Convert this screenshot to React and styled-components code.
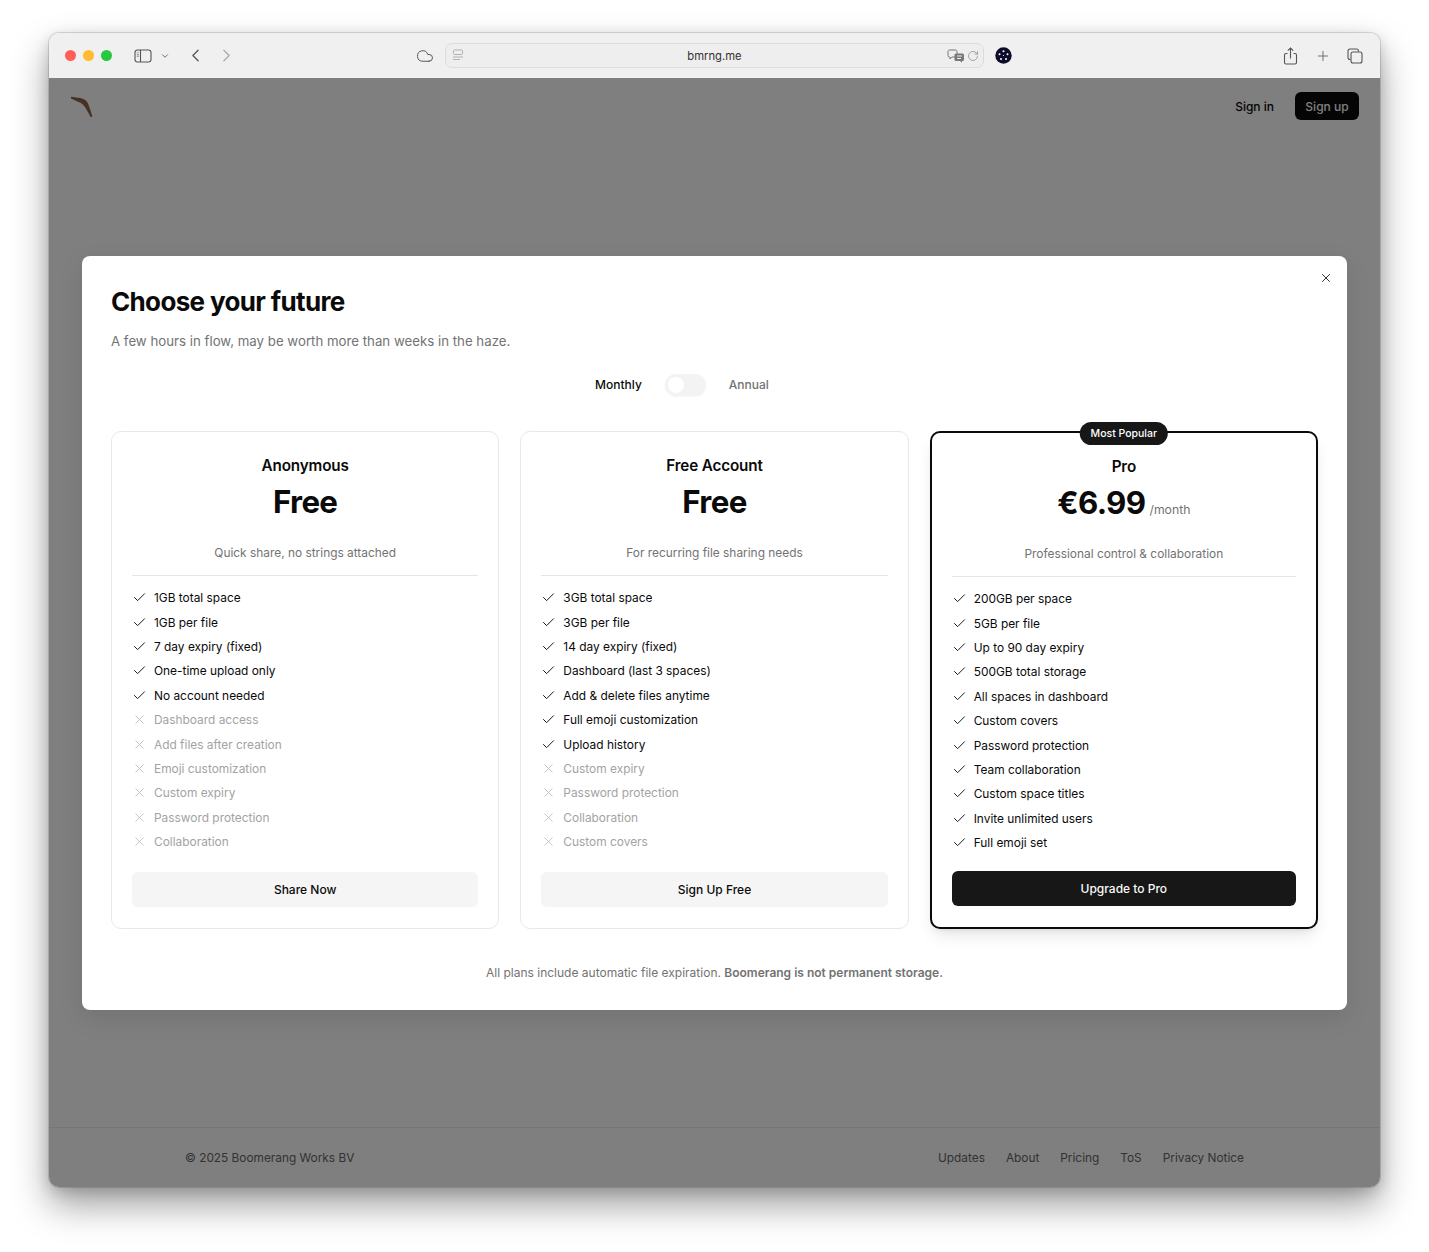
import React from 'react'
import styled, { createGlobalStyle } from 'styled-components'
import { Check, X, ChevronDown, ChevronLeft, ChevronRight, Cloud, Plus, RotateCw } from 'lucide-react'

const Global = createGlobalStyle`
  html, body { margin: 0; background: #fff; }
  body { font-family: Inter, "Liberation Sans", sans-serif; color: #0a0a0a; -webkit-font-smoothing: antialiased; }
  * { box-sizing: border-box; }
`

const Desktop = styled.div`
  height: 1252px;
  padding: 33px 49px 65px;
`
const Win = styled.div`
  position: relative;
  height: 100%;
  display: flex;
  flex-direction: column;
  border-radius: 10px;
  overflow: hidden;
  background: #fff;
  box-shadow: 0 0 0 1px rgba(0,0,0,.12), 0 18px 36px rgba(0,0,0,.38), 0 4px 14px rgba(0,0,0,.16);
`
const Toolbar = styled.div`
  height: 45px;
  flex: none;
  display: flex;
  align-items: center;
  padding: 0 15px 0 16px;
  background: #f0f0f0;
  color: #555;
  svg { flex: none; }
`
const Lights = styled.div`
  display: flex;
  flex: none;
  gap: 7px;
  margin-right: 22px;
`
const Light = styled.span`
  width: 11px;
  height: 11px;
  border-radius: 50%;
  background: ${p => p.$c};
`
const Group = styled.div`
  display: flex;
  flex: none;
  align-items: center;
  gap: ${p => p.$gap || 0}px;
  margin-left: ${p => p.$left || 0}px;
`
const UrlBar = styled.div`
  position: relative;
  width: 539px;
  height: 25px;
  display: flex;
  align-items: center;
  justify-content: space-between;
  padding: 0 4px 0 6px;
  border-radius: 7px;
  border: 1px solid #dcdcdc;
  background: #eeeeee;
  color: #777;
`
const UrlText = styled.span`
  position: absolute;
  left: 0;
  right: 0;
  text-align: center;
  font-size: 11.25px;
  color: #333;
`
const Page = styled.div`
  position: relative;
  flex: 1;
  display: flex;
  flex-direction: column;
`
const Nav = styled.header`
  display: flex;
  align-items: center;
  justify-content: space-between;
  padding: 14px 21px 0 20px;
`
const NavRight = styled.div`
  display: flex;
  align-items: center;
  gap: 21px;
  font-size: 12px;
  font-weight: 500;
`
const SignUp = styled.span`
  height: 28px;
  width: 64px;
  display: flex;
  align-items: center;
  justify-content: center;
  border-radius: 6px;
  background: #0a0a0a;
  color: #fff;
`
const Footer = styled.footer`
  margin-top: auto;
  height: 60px;
  display: flex;
  align-items: center;
  justify-content: space-between;
  padding: 0 136px 0 136px;
  border-top: 1px solid #ececec;
  font-size: 11.85px;
  color: #666;
`
const FootLinks = styled.div`
  display: flex;
  gap: 21px;
`
const Overlay = styled.div`
  position: absolute;
  inset: 0;
  display: flex;
  align-items: center;
  justify-content: center;
  background: rgba(0,0,0,.5);
`
const Modal = styled.div`
  position: relative;
  width: 1265px;
  padding: 30px 29px 28px;
  border-radius: 8px;
  background: #fff;
  box-shadow: 0 8px 24px rgba(0,0,0,.1);
`
const Close = styled.span`
  position: absolute;
  top: 15px;
  right: 14px;
  display: flex;
  color: #222;
`
const Title = styled.h2`
  margin: 0;
  font-size: 26px;
  line-height: 31px;
  font-weight: 700;
  letter-spacing: -0.025em;
  color: #0a0a0a;
`
const Sub = styled.p`
  margin: 14px 0 0;
  font-size: 13.25px;
  line-height: 20px;
  color: #737373;
`
const Billing = styled.div`
  margin-top: 23px;
  padding-right: 65px;
  display: flex;
  align-items: center;
  justify-content: center;
  gap: 23px;
  font-size: 12px;
  font-weight: 500;
`
const BillLabel = styled.span`
  color: ${p => (p.$active ? '#0a0a0a' : '#737373')};
`
const Track = styled.span`
  width: 41px;
  height: 22px;
  padding: 3px;
  border-radius: 11px;
  background: #f3f3f3;
  box-shadow: 0 1px 2px rgba(0,0,0,.04);
`
const Knob = styled.span`
  display: block;
  width: 16px;
  height: 16px;
  border-radius: 50%;
  background: #fff;
`
const Plans = styled.div`
  margin-top: 35px;
  display: grid;
  grid-template-columns: repeat(3, 1fr);
  gap: 21px;
`
const Card = styled.div`
  position: relative;
  height: 498px;
  display: flex;
  flex-direction: column;
  padding: 22px 20px 21px;
  border: ${p => (p.$featured ? '2px solid #0a0a0a' : '1px solid #e8e8e8')};
  border-radius: 10px;
  background: #fff;
  box-shadow: ${p => (p.$featured ? '0 9px 16px -3px rgba(0,0,0,.1), 0 4px 6px -4px rgba(0,0,0,.1)' : 'none')};
`
const Badge = styled.span`
  position: absolute;
  top: -11px;
  left: 50%;
  transform: translateX(-50%);
  height: 23px;
  padding: 0 11px;
  display: flex;
  align-items: center;
  white-space: nowrap;
  border-radius: 12px;
  background: #171717;
  color: #fff;
  font-size: 10.5px;
  font-weight: 500;
`
const PlanHead = styled.div`
  text-align: center;
  padding-bottom: 13px;
  border-bottom: 1px solid #e5e5e5;
`
const PlanName = styled.div`
  font-size: 15.25px;
  line-height: 24px;
  font-weight: 600;
  letter-spacing: -0.01em;
`
const Price = styled.div`
  margin-top: 7px;
  height: 35px;
  display: flex;
  align-items: baseline;
  justify-content: center;
  gap: 4px;
  font-size: 31.25px;
  line-height: 35px;
  font-weight: 700;
  letter-spacing: -0.02em;
`
const Per = styled.span`
  font-size: 12.25px;
  line-height: 14px;
  font-weight: 400;
  letter-spacing: 0;
  color: #737373;
`
const Blurb = styled.div`
  margin-top: 24px;
  font-size: 11.9px;
  line-height: 18px;
  color: #737373;
`
const List = styled.ul`
  list-style: none;
  margin: 13.5px 0 0;
  padding: 0;
  display: flex;
  flex-direction: column;
  gap: 7px;
`
const Row = styled.li`
  display: flex;
  align-items: center;
  gap: 7px;
  height: 17.42px;
  font-size: 11.9px;
  color: ${p => (p.$off ? '#a3a3a3' : '#0a0a0a')};
  svg { flex: none; }
`
const Cta = styled.div`
  margin-top: auto;
  height: 35px;
  display: flex;
  align-items: center;
  justify-content: center;
  border-radius: 6px;
  font-size: 12px;
  font-weight: 500;
  background: ${p => (p.$dark ? '#171717' : '#f5f5f5')};
  color: ${p => (p.$dark ? '#fafafa' : '#0a0a0a')};
`
const Note = styled.p`
  margin: 35px 0 0;
  text-align: center;
  font-size: 12px;
  line-height: 18px;
  color: #737373;
  b { font-weight: 600; }
`

const plans = [
  {
    name: 'Anonymous', price: 'Free', blurb: 'Quick share, no strings attached', cta: 'Share Now',
    yes: ['1GB total space', '1GB per file', '7 day expiry (fixed)', 'One-time upload only', 'No account needed'],
    no: ['Dashboard access', 'Add files after creation', 'Emoji customization', 'Custom expiry', 'Password protection', 'Collaboration'],
  },
  {
    name: 'Free Account', price: 'Free', blurb: 'For recurring file sharing needs', cta: 'Sign Up Free',
    yes: ['3GB total space', '3GB per file', '14 day expiry (fixed)', 'Dashboard (last 3 spaces)', 'Add & delete files anytime', 'Full emoji customization', 'Upload history'],
    no: ['Custom expiry', 'Password protection', 'Collaboration', 'Custom covers'],
  },
  {
    name: 'Pro', price: '€6.99', per: '/month', blurb: 'Professional control & collaboration', cta: 'Upgrade to Pro', featured: true,
    yes: ['200GB per space', '5GB per file', 'Up to 90 day expiry', '500GB total storage', 'All spaces in dashboard', 'Custom covers', 'Password protection', 'Team collaboration', 'Custom space titles', 'Invite unlimited users', 'Full emoji set'],
    no: [],
  },
]

const SidebarIcon = () => (
  <svg width="18" height="14" viewBox="0 0 18 14" fill="none" stroke="#555" strokeWidth="1.1">
    <rect x="1" y="1" width="16" height="12" rx="2.5" />
    <path d="M6.5 1v12" />
    <path d="M2.8 3.8h2M2.8 5.6h2M2.8 7.4h2" stroke="#999" />
  </svg>
)
const ReaderIcon = () => (
  <svg width="12" height="13" viewBox="0 0 12 13" fill="none" stroke="#999" strokeWidth=".7">
    <rect x="1.500" y="1" width="9" height="4.500" rx="1" />
    <path d="M1 8h10M1 10.500h7" />
  </svg>
)
const TranslateIcon = () => (
  <svg width="18" height="14" viewBox="0 0 18 14">
    <path d="M2.5 1h6a1.5 1.5 0 0 1 1.5 1.5v4A1.5 1.5 0 0 1 8.5 8H5l-2 2V8h-.5A1.5 1.5 0 0 1 1 6.500v-4A1.500 1.500 0 0 1 2.500 1z" fill="none" stroke="#777" strokeWidth="1" />
    <path d="M9 4.500h6.500A1.500 1.500 0 0 1 17 6v4.500a1.500 1.500 0 0 1-1.500 1.500H15v1.800L13 12H9a1.500 1.500 0 0 1-1.500-1.500V6A1.500 1.500 0 0 1 9 4.500z" fill="#777" />
    <path d="M10 7h5M10 9.500h4" stroke="#eee" strokeWidth="1" />
  </svg>
)
const ExtensionIcon = () => (
  <svg width="17" height="17" viewBox="0 0 17 17">
    <circle cx="8.500" cy="8.500" r="8.200" fill="#0c0c2a" />
    <g fill="#fff">
      <circle cx="8.500" cy="4.300" r="1" />
      <circle cx="12.500" cy="7.300" r="1" />
      <circle cx="11" cy="12" r="1" />
      <circle cx="6" cy="12" r="1" />
      <circle cx="4.500" cy="7.300" r="1" />
      <circle cx="8.500" cy="8.500" r=".6" />
    </g>
  </svg>
)
const ShareIcon = () => (
  <svg width="15" height="18" viewBox="0 0 15 18" fill="none" stroke="#555" strokeWidth="1.1">
    <path d="M4.500 6.500H3A1.500 1.500 0 0 0 1.500 8v7.500A1.500 1.500 0 0 0 3 17h9a1.500 1.500 0 0 0 1.500-1.500V8A1.500 1.500 0 0 0 12 6.500h-1.500" />
    <path d="M7.500 11.500V1M4.800 3.600 7.500 1l2.700 2.600" />
  </svg>
)
const TabsIcon = () => (
  <svg width="16" height="16" viewBox="0 0 16 16" fill="none" stroke="#555" strokeWidth="1.1">
    <path d="M3.500 11.500H3A2 2 0 0 1 1 9.500V3a2 2 0 0 1 2-2h6.500a2 2 0 0 1 2 2v.500" />
    <rect x="4" y="4" width="11" height="11" rx="2" />
  </svg>
)
const Boomerang = () => (
  <svg width="24" height="22" viewBox="0 0 24 22">
    <path d="M2 1.800L11 3C15 3.800 17.500 5.200 19 8.500 20.600 12 22 17 23.400 21.500L21.600 22.100C19.500 18 17 13 14.800 10.500 13.200 8.500 11.500 7.600 9.500 7 7 6 4.500 4.500 2 3.500z" fill="#8f6248" />
  </svg>
)

const Plan = ({ plan }) => (
  <Card $featured={plan.featured}>
    {plan.featured && <Badge>Most Popular</Badge>}
    <PlanHead>
      <PlanName>{plan.name}</PlanName>
      <Price>
        {plan.price}
        {plan.per && <Per>{plan.per}</Per>}
      </Price>
      <Blurb>{plan.blurb}</Blurb>
    </PlanHead>
    <List>
      {plan.yes.map(t => (
        <Row key={t}><Check size={15} strokeWidth={1.5} />{t}</Row>
      ))}
      {plan.no.map(t => (
        <Row key={t} $off><X size={15} strokeWidth={1.2} color="#b5b5b5" />{t}</Row>
      ))}
    </List>
    <Cta $dark={plan.featured}>{plan.cta}</Cta>
  </Card>
)

export default function App() {
  return (
    <Desktop>
      <Global />
      <Win>
        <Toolbar>
          <Lights>
            <Light $c="#ff5f57" />
            <Light $c="#febc2e" />
            <Light $c="#28c840" />
          </Lights>
          <SidebarIcon />
          <Group $left={8}><ChevronDown size={10} strokeWidth={2} /></Group>
          <Group $left={15} $gap={10}>
            <ChevronLeft size={21} strokeWidth={1.5} />
            <ChevronRight size={21} strokeWidth={1.5} color="#aaa" />
          </Group>
          <Group $left={179}><Cloud size={18} strokeWidth={1.3} /></Group>
          <Group $left={11}>
            <UrlBar>
              <ReaderIcon />
              <UrlText>bmrng.me</UrlText>
              <Group $gap={2}>
                <TranslateIcon />
                <RotateCw size={12} strokeWidth={1.2} />
              </Group>
            </UrlBar>
          </Group>
          <Group $left={11}><ExtensionIcon /></Group>
          <Group $left={271} $gap={16.5}>
            <ShareIcon />
            <Plus size={16} strokeWidth={1.2} />
            <TabsIcon />
          </Group>
        </Toolbar>
        <Page>
          <Nav>
            <Boomerang />
            <NavRight>
              <span>Sign in</span>
              <SignUp>Sign up</SignUp>
            </NavRight>
          </Nav>
          <Footer>
            <span>© 2025 Boomerang Works BV</span>
            <FootLinks>
              <span>Updates</span>
              <span>About</span>
              <span>Pricing</span>
              <span>ToS</span>
              <span>Privacy Notice</span>
            </FootLinks>
          </Footer>
          <Overlay>
            <Modal>
              <Close><X size={14} strokeWidth={1.6} /></Close>
              <Title>Choose your future</Title>
              <Sub>A few hours in flow, may be worth more than weeks in the haze.</Sub>
              <Billing>
                <BillLabel $active>Monthly</BillLabel>
                <Track><Knob /></Track>
                <BillLabel>Annual</BillLabel>
              </Billing>
              <Plans>
                {plans.map(p => <Plan key={p.name} plan={p} />)}
              </Plans>
              <Note>All plans include automatic file expiration. <b>Boomerang is not permanent storage.</b></Note>
            </Modal>
          </Overlay>
        </Page>
      </Win>
    </Desktop>
  )
}
